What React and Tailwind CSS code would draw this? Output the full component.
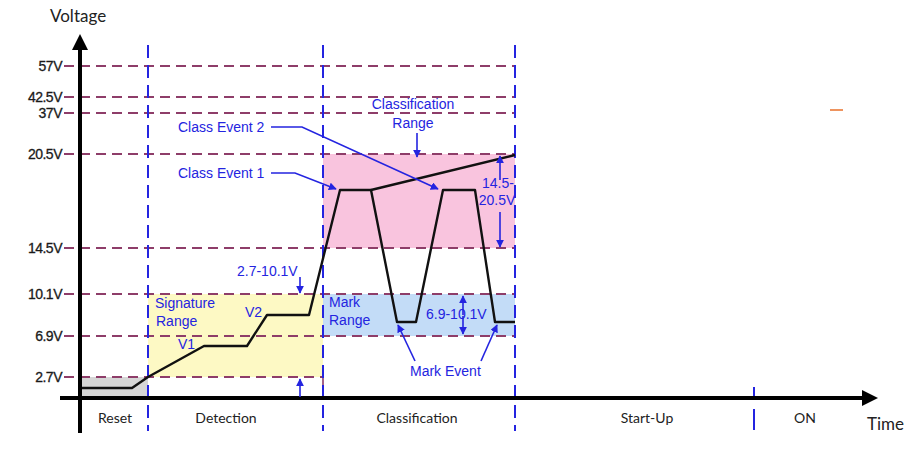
const levels = [
  { y: 66, label: "57V" },
  { y: 97, label: "42.5V" },
  { y: 113, label: "37V" },
  { y: 154, label: "20.5V" },
  { y: 248, label: "14.5V" },
  { y: 294, label: "10.1V" },
  { y: 336, label: "6.9V" },
  { y: 377, label: "2.7V", end: 323 },
];

const phases = [
  { x: 115, label: "Reset" },
  { x: 226, label: "Detection" },
  { x: 417, label: "Classification" },
  { x: 647, label: "Start-Up" },
  { x: 805, label: "ON" },
];

const BLUE = "#2424e0";

function Arrow({ x1, y1, x2, y2 }) {
  return <line x1={x1} y1={y1} x2={x2} y2={y2} stroke={BLUE} strokeWidth="1.6" markerEnd="url(#blueHead)" />;
}

export default function App() {
  return (
    <div className="w-[924px] h-[451px] bg-white overflow-hidden">
      <svg width="924" height="451" viewBox="0 0 924 451" className="block">
        <defs>
          <marker id="blueHead" viewBox="0 0 10 10" refX="9" refY="5" markerWidth="8" markerHeight="8" orient="auto-start-reverse" markerUnits="userSpaceOnUse">
            <path d="M0 0 L10 5 L0 10 z" fill={BLUE} />
          </marker>
        </defs>

        {/* shaded ranges */}
        <rect x="82" y="377" width="66" height="21" fill="#d6d6d6" />
        <rect x="148" y="294" width="175" height="83" fill="#fdf9c4" />
        <rect x="323" y="154" width="192" height="94" fill="#f9c4de" />
        <rect x="323" y="294" width="192" height="42" fill="#c3dcf7" />

        {/* horizontal level lines */}
        {levels.map((l) => (
          <g key={l.label}>
            <line x1="64" y1={l.y} x2={l.end || 515} y2={l.y} stroke="#8e3d69" strokeWidth="1.8" strokeDasharray="10 6" />
            <text x="62" y={l.y + 5} textAnchor="end" className="font-['Liberation_Sans',Arial,sans-serif]" fontSize="14" fill="#1a1a1a" stroke="#1a1a1a" strokeWidth="0.3" letterSpacing="-0.5">
              {l.label}
            </text>
          </g>
        ))}
        <line x1="323" y1="377" x2="323" y2="398" stroke="#8e3d69" strokeWidth="1.6" />

        {/* phase boundaries */}
        {[148, 323, 515].map((x) => (
          <line key={x} x1={x} y1="45" x2={x} y2="431" stroke={BLUE} strokeWidth="2" strokeDasharray="13 7" />
        ))}
        <line x1="754" y1="387" x2="754" y2="398" stroke={BLUE} strokeWidth="2" />
        <line x1="754" y1="409" x2="754" y2="430" stroke={BLUE} strokeWidth="2" />

        {/* waveform */}
        <polyline
          points="82,388 132,388 148,377 204,346 247,346 267,315 309,315 340,190 371,190 397,322 416,322 443,190 475,190 495,322 515,322"
          fill="none" stroke="#111" strokeWidth="2.4" strokeLinejoin="round" />
        <line x1="371" y1="190" x2="515" y2="155" stroke="#111" strokeWidth="2.4" />

        {/* axes */}
        <line x1="80" y1="48" x2="80" y2="433" stroke="#000" strokeWidth="4" />
        <path d="M72 50 L80 34 L88 50 z" fill="#000" />
        <line x1="60" y1="398" x2="866" y2="398" stroke="#000" strokeWidth="4" />
        <path d="M862 390 L878 398 L862 406 z" fill="#000" />

        {/* annotations */}
        <g className="font-['Liberation_Sans',Arial,sans-serif]" fontSize="14" fill={BLUE}>
          <text x="178" y="132">Class Event 2</text>
          <polyline points="271,127 302,127 438,189" fill="none" stroke={BLUE} strokeWidth="1.6" markerEnd="url(#blueHead)" />
          <text x="178" y="178">Class Event 1</text>
          <polyline points="271,173 295,173 336,189" fill="none" stroke={BLUE} strokeWidth="1.6" markerEnd="url(#blueHead)" />

          <text x="413" y="109" textAnchor="middle">Classification</text>
          <text x="413" y="128" textAnchor="middle">Range</text>
          <Arrow x1={417} y1={133} x2={417} y2={157} />

          <text x="498" y="188" textAnchor="middle">14.5-</text>
          <text x="497" y="205" textAnchor="middle">20.5V</text>
          <Arrow x1={500} y1={180} x2={500} y2={156} />
          <Arrow x1={500} y1={212} x2={500} y2={247} />

          <text x="237" y="276">2.7-10.1V</text>
          <Arrow x1={300} y1={277} x2={300} y2={293} />
          <Arrow x1={300} y1={397} x2={300} y2={379} />

          <text x="155" y="308">Signature</text>
          <text x="156" y="326">Range</text>
          <text x="178" y="349">V1</text>
          <text x="245" y="317">V2</text>

          <text x="329" y="307">Mark</text>
          <text x="329" y="325">Range</text>
          <text x="426" y="319">6.9-10.1V</text>
          <Arrow x1={463} y1={315} x2={463} y2={296} />
          <Arrow x1={463} y1={316} x2={463} y2={334} />

          <text x="410" y="376">Mark Event</text>
          <Arrow x1={415} y1={361} x2={398} y2={325} />
          <Arrow x1={481} y1={361} x2={497} y2={325} />
        </g>

        {/* axis titles and phase names */}
        <g className="font-['Lato','Open_Sans',sans-serif]" fill="#222">
          <text x="50" y="22" fontSize="17">Voltage</text>
          <text x="867" y="430" fontSize="17">Time</text>
          {phases.map((p) => (
            <text key={p.label} x={p.x} y="423" fontSize="14" textAnchor="middle">{p.label}</text>
          ))}
        </g>

        <line x1="830" y1="110" x2="843" y2="110" stroke="#e8702a" strokeWidth="1.5" />
      </svg>
    </div>
  );
}
